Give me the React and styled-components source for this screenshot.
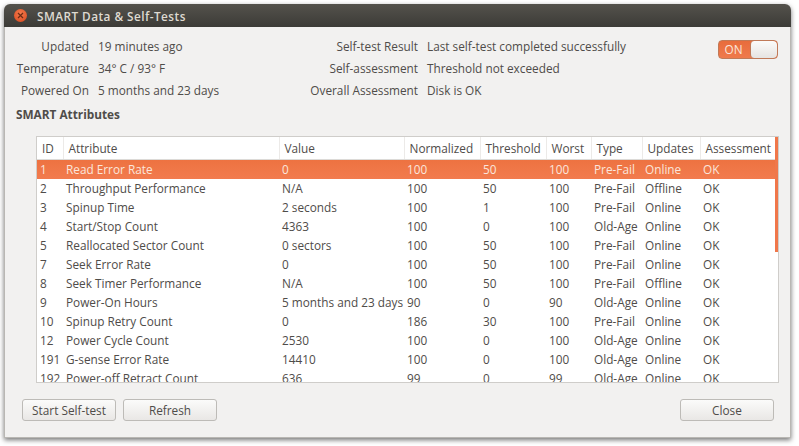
import React from "react";
import styled, { createGlobalStyle } from "styled-components";

const Global = createGlobalStyle`
  html, body { margin: 0; background: #fff; }
  body { font-family: "Open Sans", "Liberation Sans", sans-serif; font-size: 11.8px; color: #4f4c49; }
`;

const columns = [
  { title: "ID", width: 26 },
  { title: "Attribute", width: 216 },
  { title: "Value", width: 125 },
  { title: "Normalized", width: 76 },
  { title: "Threshold", width: 66 },
  { title: "Worst", width: 45 },
  { title: "Type", width: 51 },
  { title: "Updates", width: 58 },
  { title: "Assessment", width: 79 },
];

const rows = [
  ["1", "Read Error Rate", "0", "100", "50", "100", "Pre-Fail", "Online", "OK"],
  ["2", "Throughput Performance", "N/A", "100", "50", "100", "Pre-Fail", "Offline", "OK"],
  ["3", "Spinup Time", "2 seconds", "100", "1", "100", "Pre-Fail", "Online", "OK"],
  ["4", "Start/Stop Count", "4363", "100", "0", "100", "Old-Age", "Online", "OK"],
  ["5", "Reallocated Sector Count", "0 sectors", "100", "50", "100", "Pre-Fail", "Online", "OK"],
  ["7", "Seek Error Rate", "0", "100", "50", "100", "Pre-Fail", "Online", "OK"],
  ["8", "Seek Timer Performance", "N/A", "100", "50", "100", "Pre-Fail", "Offline", "OK"],
  ["9", "Power-On Hours", "5 months and 23 days", "90", "0", "90", "Old-Age", "Online", "OK"],
  ["10", "Spinup Retry Count", "0", "186", "30", "100", "Pre-Fail", "Online", "OK"],
  ["12", "Power Cycle Count", "2530", "100", "0", "100", "Old-Age", "Online", "OK"],
  ["191", "G-sense Error Rate", "14410", "100", "0", "100", "Old-Age", "Online", "OK"],
  ["192", "Power-off Retract Count", "636", "99", "0", "99", "Old-Age", "Online", "OK"],
];

const info = [
  ["Updated", "19 minutes ago", "Self-test Result", "Last self-test completed successfully"],
  ["Temperature", "34° C / 93° F", "Self-assessment", "Threshold not exceeded"],
  ["Powered On", "5 months and 23 days", "Overall Assessment", "Disk is OK"],
];

const Page = styled.div`
  padding: 4px 8px 8px 4px;
`;

const Window = styled.div`
  width: 787px;
  height: 434px;
  display: flex;
  flex-direction: column;
  background: #f2f1f0;
  border-radius: 6px 6px 0 0;
  box-shadow: 0 2px 5px rgba(0, 0, 0, 0.55);
  overflow: hidden;
`;

const TitleBar = styled.div`
  height: 23px;
  display: flex;
  align-items: center;
  gap: 10px;
  padding-left: 10px;
  background: linear-gradient(#54524c, #3c3b37);
  color: #dfdbd2;
  font-weight: 600;
  letter-spacing: 0.45px;
`;

const CloseDot = styled.div`
  width: 13px;
  height: 13px;
  border-radius: 50%;
  display: flex;
  align-items: center;
  justify-content: center;
  background: radial-gradient(circle at 50% 35%, #f47a4c, #d8481e);
`;

const Content = styled.div`
  flex: 1;
  min-height: 0;
  display: flex;
  flex-direction: column;
  padding: 8px 12px 0 11px;
  border-left: 1px solid #b9b7b3;
  border-right: 1px solid #b9b7b3;
  border-bottom: 1px solid #b9b7b3;
`;

const Summary = styled.div`
  display: flex;
  justify-content: space-between;
  align-items: flex-start;
`;

const InfoGrid = styled.div`
  display: grid;
  grid-template-columns: 73px 229px 82px 1fr;
  grid-auto-rows: 22px;
  column-gap: 9px;
  align-items: center;
  flex: 1;
`;

const Label = styled.span`
  text-align: right;
  white-space: nowrap;
  justify-self: end;
`;

const Value = styled.span`
  white-space: nowrap;
`;

const Toggle = styled.div`
  width: 60px;
  height: 19px;
  margin-top: 5px;
  box-sizing: border-box;
  display: flex;
  border: 1px solid #c07a58;
  border-radius: 4px;
  background: linear-gradient(#e86c3c, #ef7a4c);
  overflow: hidden;
`;

const ToggleText = styled.span`
  width: 29px;
  padding-right: 2px;
  text-align: center;
  line-height: 17px;
  color: #fbe6dc;
`;

const ToggleKnob = styled.span`
  flex: 1;
  border-left: 1px solid #c07a58;
  border-radius: 4px;
  background: linear-gradient(#fbfbfa, #e6e4e1);
`;

const SectionTitle = styled.div`
  font-weight: 700;
  margin-top: 5px;
  line-height: 16px;
`;

const TableBox = styled.div`
  position: relative;
  height: 247px;
  margin: 14px 0 0 20px;
  width: 743px;
  box-sizing: border-box;
  border: 1px solid #cfcdca;
  background: #fff;
  overflow: hidden;
`;

const Scrollbar = styled.div`
  position: absolute;
  top: 0;
  right: 0;
  width: 3px;
  height: 115px;
  background: #f0774a;
`;

const Table = styled.table`
  table-layout: fixed;
  border-collapse: collapse;
  width: 742px;
`;

const HeadCell = styled.th`
  height: 22px;
  padding: 1px 0 0 5px;
  text-align: left;
  font-weight: 400;
  white-space: nowrap;
  overflow: hidden;
  background: #fff;
  border-right: 1px solid #eceae8;
  border-bottom: 1px solid #dcdad7;
  box-sizing: border-box;
`;

const Row = styled.tr`
  height: 19px;
  background: ${(p) => (p.$selected ? "linear-gradient(#ed7240, #f27b4e)" : "#fff")};
  color: ${(p) => (p.$selected ? "#fbe6dc" : "#4f4c49")};
`;

const Cell = styled.td`
  padding: 1px 0 1px 3px;
  white-space: nowrap;
  overflow: hidden;
  line-height: 17px;
`;

const Footer = styled.div`
  display: flex;
  justify-content: space-between;
  padding: 16px 4px 0 6px;
`;

const ButtonGroup = styled.div`
  display: flex;
  gap: 7px;
`;

const Button = styled.button`
  width: 94px;
  height: 22px;
  padding: 0;
  font: inherit;
  color: #4f4c49;
  background: linear-gradient(#fbfbfa, #e9e7e5);
  border: 1px solid #bdbbb7;
  border-radius: 3px;
`;

export default function App() {
  return (
    <Page>
      <Global />
      <Window>
        <TitleBar>
          <CloseDot>
            <svg width="7" height="7" viewBox="0 0 7 7">
              <path d="M1 1l5 5M6 1L1 6" stroke="#6e2c14" strokeWidth="1.2" fill="none" />
            </svg>
          </CloseDot>
          SMART Data &amp; Self-Tests
        </TitleBar>
        <Content>
          <Summary>
            <InfoGrid>
              {info.map((line) => (
                <React.Fragment key={line[0]}>
                  <Label>{line[0]}</Label>
                  <Value>{line[1]}</Value>
                  <Label>{line[2]}</Label>
                  <Value>{line[3]}</Value>
                </React.Fragment>
              ))}
            </InfoGrid>
            <Toggle>
              <ToggleText>ON</ToggleText>
              <ToggleKnob />
            </Toggle>
          </Summary>
          <SectionTitle>SMART Attributes</SectionTitle>
          <TableBox>
            <Table>
              <colgroup>
                {columns.map((c) => (
                  <col key={c.title} style={{ width: c.width }} />
                ))}
              </colgroup>
              <thead>
                <tr>
                  {columns.map((c) => (
                    <HeadCell key={c.title}>{c.title}</HeadCell>
                  ))}
                </tr>
              </thead>
              <tbody>
                {rows.map((r, i) => (
                  <Row key={r[0]} $selected={i === 0}>
                    {r.map((v, j) => (
                      <Cell key={j}>{v}</Cell>
                    ))}
                  </Row>
                ))}
              </tbody>
            </Table>
            <Scrollbar />
          </TableBox>
          <Footer>
            <ButtonGroup>
              <Button>Start Self-test</Button>
              <Button>Refresh</Button>
            </ButtonGroup>
            <Button>Close</Button>
          </Footer>
        </Content>
      </Window>
    </Page>
  );
}
